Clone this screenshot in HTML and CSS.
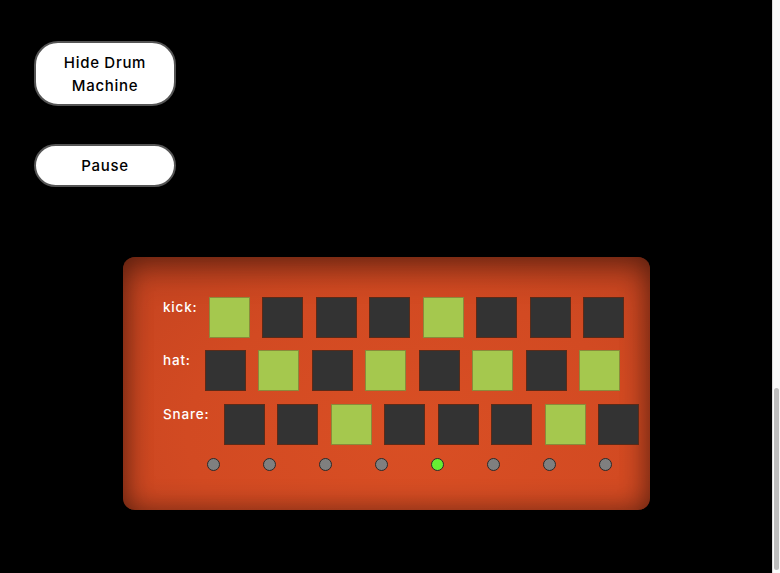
FILE: index.html
```html
<!DOCTYPE html>
<html>
<head>
<meta charset="utf-8">
<link rel="stylesheet" href="styles.css">
</head>
<body>
<div class="page">
  <main class="main">
    <button class="btn btn-tall">Hide Drum<br>Machine</button>
    <button class="btn btn-short">Pause</button>
    <section class="machine">
      <div class="row">
        <span class="label label-kick">kick:</span>
        <div class="pads">
          <span class="pad on"></span><span class="pad"></span><span class="pad"></span><span class="pad"></span>
          <span class="pad on"></span><span class="pad"></span><span class="pad"></span><span class="pad"></span>
        </div>
      </div>
      <div class="row">
        <span class="label label-hat">hat:</span>
        <div class="pads">
          <span class="pad"></span><span class="pad on"></span><span class="pad"></span><span class="pad on"></span>
          <span class="pad"></span><span class="pad on"></span><span class="pad"></span><span class="pad on"></span>
        </div>
      </div>
      <div class="row">
        <span class="label label-snare">Snare:</span>
        <div class="pads">
          <span class="pad"></span><span class="pad"></span><span class="pad on"></span><span class="pad"></span>
          <span class="pad"></span><span class="pad"></span><span class="pad on"></span><span class="pad"></span>
        </div>
      </div>
      <div class="steps">
        <span class="dot"></span><span class="dot"></span><span class="dot"></span><span class="dot"></span>
        <span class="dot active"></span><span class="dot"></span><span class="dot"></span><span class="dot"></span>
      </div>
    </section>
  </main>
  <aside class="scrollbar">
    <div class="track"></div>
    <div class="thumb"></div>
  </aside>
</div>
</body>
</html>
```
FILE: styles.css
```css
* { box-sizing: border-box; }
html, body { margin: 0; padding: 0; background: #000; height: 100%; }
body { font-family: Inter, "DejaVu Sans", sans-serif; overflow: hidden; }
.page { display: flex; width: 780px; height: 573px; }
.main { flex: 1; display: flex; flex-direction: column; align-items: flex-start; padding: 41px 0 0 34px; }
.btn {
  width: 142px;
  background: #fff;
  border: 2px solid #555;
  border-radius: 24px;
  color: #000;
  font-family: Inter, "DejaVu Sans", sans-serif;
  font-size: 15px;
  font-weight: 500;
  line-height: 23px;
  letter-spacing: 0.7px;
  padding: 0;
  text-align: center;
}
.btn-tall { height: 65px; }
.btn-short { height: 43px; margin-top: 38px; }
.machine {
  margin: 70px 0 0 89px;
  width: 527px;
  height: 253px;
  border-radius: 12px;
  background: radial-gradient(ellipse at 55% 70%, #d94f24 0%, #d24a22 55%, #c34320 100%);
  box-shadow: inset 0 0 28px rgba(0,0,0,0.45), inset 0 16px 30px rgba(0,0,0,0.25);
  padding: 40px 0 0 40px;
  display: flex;
  flex-direction: column;
  gap: 12.4px;
}
.row { display: flex; align-items: flex-start; }
.label { color: #fff; font-size: 13.5px; font-weight: 500; line-height: 20px; letter-spacing: 0.8px; }
.label-kick { width: 46px; }
.label-hat { width: 42px; }
.label-snare { width: 61px; }
.pads { display: flex; gap: 12.43px; }
.pad { width: 41px; height: 41px; background: #333; border: 1px solid #5a2a18; }
.pad.on { background: #a5c84e; border-color: #8a8a3a; }
.steps { display: flex; gap: 43px; padding-left: 44px; margin-top: 0.6px; }
.dot { width: 13px; height: 13px; border-radius: 50%; background: #7f7f7f; border: 1px solid #2a2a2a; }
.dot.active { background: #66ee33; }
.scrollbar { width: 8px; display: flex; flex-direction: column; background: #fafafa; border-left: 1px solid #ddd; }
.track { height: 388px; }
.thumb { flex: 1; margin: 0 1px 3px 1px; background: #bdbdbd; border-radius: 3px; }
```
